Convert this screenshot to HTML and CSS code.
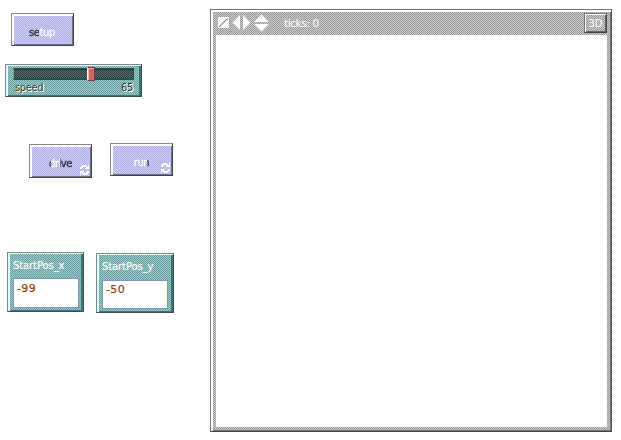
FILE: index.html
```html
<!DOCTYPE html>
<html lang="en">
<head>
<meta charset="utf-8">
<title>Model interface</title>
<link rel="stylesheet" href="styles.css">
</head>
<body>
<main class="canvas">
  <button class="widget button setup"><span class="label setup-label">setup</span></button>
  <section class="widget teal slider">
    <div class="track"><div class="thumb"></div></div>
    <div class="slider-text"><span class="speed">speed</span><span class="value">65</span></div>
  </section>
  <button class="widget button drive"><span class="label drive-label">drive</span>
    <svg class="loop" width="9" height="10" viewBox="0 0 9 10" shape-rendering="crispEdges"><path d="M0 2h1V1h1V0h4v1h1v1h1V0h1v4H5V3h1V2H3v1H2v1H0zM9 8H8v1H7v1H3V9H2V8H1v2H0V6h4v1H3v1h3V7h1V6h2z" fill="#fff"/></svg>
  </button>
  <button class="widget button run"><span class="label run-label">run</span>
    <svg class="loop" width="9" height="10" viewBox="0 0 9 10" shape-rendering="crispEdges"><path d="M0 2h1V1h1V0h4v1h1v1h1V0h1v4H5V3h1V2H3v1H2v1H0zM9 8H8v1H7v1H3V9H2V8H1v2H0V6h4v1H3v1h3V7h1V6h2z" fill="#fff"/></svg>
  </button>
  <section class="widget teal input start-x"><div class="caption">StartPos_x</div><div class="field">-99</div></section>
  <section class="widget teal input start-y"><div class="caption">StartPos_y</div><div class="field">-50</div></section>
  <section class="world">
    <header class="bar">
      <svg class="tools" width="54" height="18" viewBox="0 0 54 18"><path d="M2 3h11v11H2z" fill="#fff"/><path d="M3 13 12 4" stroke="#999" stroke-width="1.3"/><path d="M24 1v15l-7.500-7.500zM27 1v15l7.500-7.500z" fill="#fff"/><path d="M38 8h15l-7.500-7.500zM38 10h15l-7.500 7.500z" fill="#fff"/></svg>
      <span class="ticks">ticks: 0</span>
      <button class="three-d">3D</button>
    </header>
    <div class="view"></div>
  </section>
</main>
</body>
</html>
```
FILE: styles.css
```css
* { box-sizing: border-box; }
body { margin: 0; background: #fff; font-family: "DejaVu Sans", sans-serif; font-size: 10px; }
.canvas { position: relative; width: 621px; height: 440px; overflow: hidden; }
.widget { position: absolute; padding: 0; border: 1px solid #777; }
.widget, .bar, .three-d { font: 10px/12px "DejaVu Sans", sans-serif; }

.button {
  display: flex; width: 63px; height: 33px; justify-content: center; align-items: center;
  border-color: #888 #444 #444 #888;
  background:
    repeating-conic-gradient(rgba(150, 150, 220, .16) 0 25%, transparent 0 50%) 0 0 / 4px 4px,
    repeating-conic-gradient(#b2b2e8 0 25%, #d2d2fa 0 50%) 0 0 / 2px 2px;
  box-shadow: inset 2px 2px #fff, inset -1px -1px #70708c;
}
.setup { left: 11px; top: 13px; }
.drive { left: 29px; top: 144px; height: 34px; }
.run { left: 110px; top: 143px; }
.label { padding-top: 6px; color: transparent; -webkit-background-clip: text; background-clip: text; -webkit-text-stroke: .4px transparent; }
.setup-label { letter-spacing: -.4px; padding-right: 1px; background-image: linear-gradient(90deg, #303040 38%, #fff 38%); }
.drive-label { padding-top: 5px; letter-spacing: -.5px; background-image: linear-gradient(90deg, #404050 10%, #fff 10% 50%, #303040 50%); }
.run-label { letter-spacing: -.4px; background-image: linear-gradient(90deg, #fff 90%, #404050 90%); }
.loop { position: absolute; right: 2px; bottom: 2px; }

.teal {
  border-color: #7c8888 #345454 #345454 #7c8888;
  background: repeating-conic-gradient(#669f9f 0 25%, #9fcbc8 0 50%) 0 0 / 2px 2px;
  box-shadow: inset 2px 1px #dff, inset -2px -1px #397777;
}
.slider { left: 5px; top: 64px; width: 137px; height: 33px; padding: 3px 7px 0; }
.track {
  width: 121px; height: 12px; padding-left: 73px;
  border: 1px solid #255050; border-width: 1px 1px 2px; border-left-color: #899;
  background: repeating-conic-gradient(#303838 0 25%, #567370 0 50%) 0 0 / 2px 2px;
  box-shadow: inset 0 1px #1c3434;
}
.thumb { width: 8px; height: 14px; margin-top: -2px; border: 1px solid #793b3b; border-left-color: #fff0e8; background: #cf6666; box-shadow: inset 1px 1px #f4b4b4; }
.slider-text { display: flex; justify-content: space-between; padding: 1px 1px 0 2px; letter-spacing: -.4px; line-height: 14px; }
.speed, .value { color: #203838; text-shadow: 1px 0 #fff, 1px 1px #f0ffff; }

.input { width: 77px; height: 60px; padding: 7px 4px 0 5px; }
.start-x { left: 7px; top: 252px; }
.start-y { left: 96px; top: 253px; width: 78px; }
.caption { height: 18px; color: #fff; letter-spacing: -.1px; white-space: nowrap; -webkit-text-stroke: .2px #fff; }
.field { width: 66px; height: 30px; padding: 3px; border: 1px solid #7f94c6; background: #fff; color: #983c0c; font-size: 11px; line-height: 13px; letter-spacing: .4px; -webkit-text-stroke: .2px #983c0c; }
.start-y .field { height: 29px; margin-top: 1px; padding-top: 2px; }

.world {
  position: absolute; left: 210px; top: 9px; width: 402px; height: 423px;
  padding: 3px 4px 4px 5px; border: 1px solid #777; border-right-color: #555; border-bottom-color: #444;
  background: repeating-conic-gradient(#999 0 25%, #ccc 0 50%) 0 0 / 2px 2px;
  box-shadow: inset 2px 2px #fff, inset -1px -1px #777;
}
.bar { display: flex; height: 22px; align-items: flex-start; color: #fff; }
.tools { flex: none; margin-top: 1px; }
.ticks { margin: 5px 0 0 14px; letter-spacing: -.65px; font-size: 11px; }
.three-d {
  width: 23px; height: 20px; margin: 0 0 0 auto; padding: 2px 0 0;
  border: 1px solid #777; border-right-color: #444; border-bottom-color: #444;
  color: #fff; background: repeating-conic-gradient(#999 0 25%, #ccc 0 50%) 0 0 / 2px 2px;
  box-shadow: inset 1px 1px #fff, inset -1px -1px #666;
}
.view { height: 392px; background: #fff; }
```
